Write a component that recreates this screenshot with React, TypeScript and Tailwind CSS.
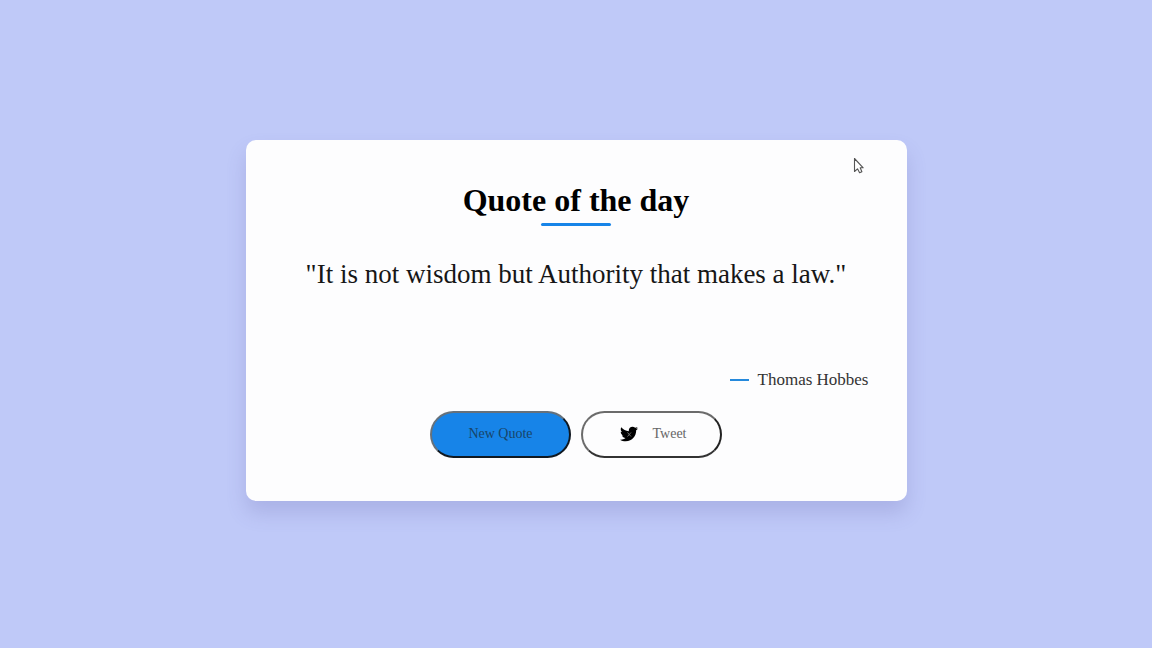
import { FaTwitter } from "react-icons/fa";

type Quote = { text: string; author: string };

const quote: Quote = {
  text: "It is not wisdom but Authority that makes a law.",
  author: "Thomas Hobbes",
};

function Pointer() {
  return (
    <svg
      aria-hidden="true"
      viewBox="0 0 12 18"
      className="pointer-events-none absolute top-[17px] right-[42px] h-[18px] w-3"
    >
      <path
        d="M1.5 1.5V14.5L4.5 11.8L6.6 15.8L8.9 14.8L7.2 10.8H10.2Z"
        fill="#fff"
        stroke="#555"
        strokeWidth="1.1"
        strokeLinejoin="round"
      />
    </svg>
  );
}

export default function App() {
  return (
    <main className="flex min-h-screen items-center justify-center bg-[#bfc9f8] px-4 py-8 font-['Liberation_Serif',serif] text-black">
      <section className="relative mb-2 w-full max-w-[661px] rounded-[10px] bg-[#fdfdfe] px-[38px] pt-10 pb-[43px] shadow-[0_12px_20px_rgba(90,85,160,0.2)]">
        <Pointer />
        <h1 className="text-center text-[32px] leading-10 font-bold">Quote of the day</h1>
        <div className="mx-auto mt-[3px] h-[3px] w-[70px] rounded-full bg-[#1784e8]" />
        <blockquote className="mt-7 min-h-[106px] text-center text-[27px] leading-10 text-[#161616]">
          "{quote.text}"
        </blockquote>
        <p className="mt-2 flex items-center justify-end gap-[9px] text-[17px] leading-6 text-[#333]">
          <span className="h-[2px] w-[19px] bg-[#2589dc]" />
          {quote.author}
        </p>
        <div className="mt-[19px] flex flex-wrap justify-center gap-[10px]">
          <button
            type="button"
            className="flex h-[47px] w-[141px] items-center justify-center rounded-[24px] border-2 border-t-[#66717b] border-r-[#101820] border-b-[#101820] border-l-[#66717b] bg-[#1784e8] text-sm text-[#174568]"
          >
            New Quote
          </button>
          <button
            type="button"
            className="flex h-[47px] w-[141px] items-center justify-center gap-[14px] rounded-[24px] border-2 border-t-[#6b6b6b] border-r-[#222] border-b-[#333] border-l-[#6b6b6b] bg-[#fdfdfe] pl-1 text-sm text-[#666]"
          >
            <span className="relative">
              <FaTwitter className="h-[18px] w-[18px] text-black" />
              <svg aria-hidden="true" viewBox="0 0 18 18" className="absolute inset-0 h-[18px] w-[18px]">
                <path d="M7.5 7.5l3.5 4M11 7.5l-3.5 4" stroke="#777" strokeWidth="0.9" />
              </svg>
            </span>
            Tweet
          </button>
        </div>
      </section>
    </main>
  );
}
